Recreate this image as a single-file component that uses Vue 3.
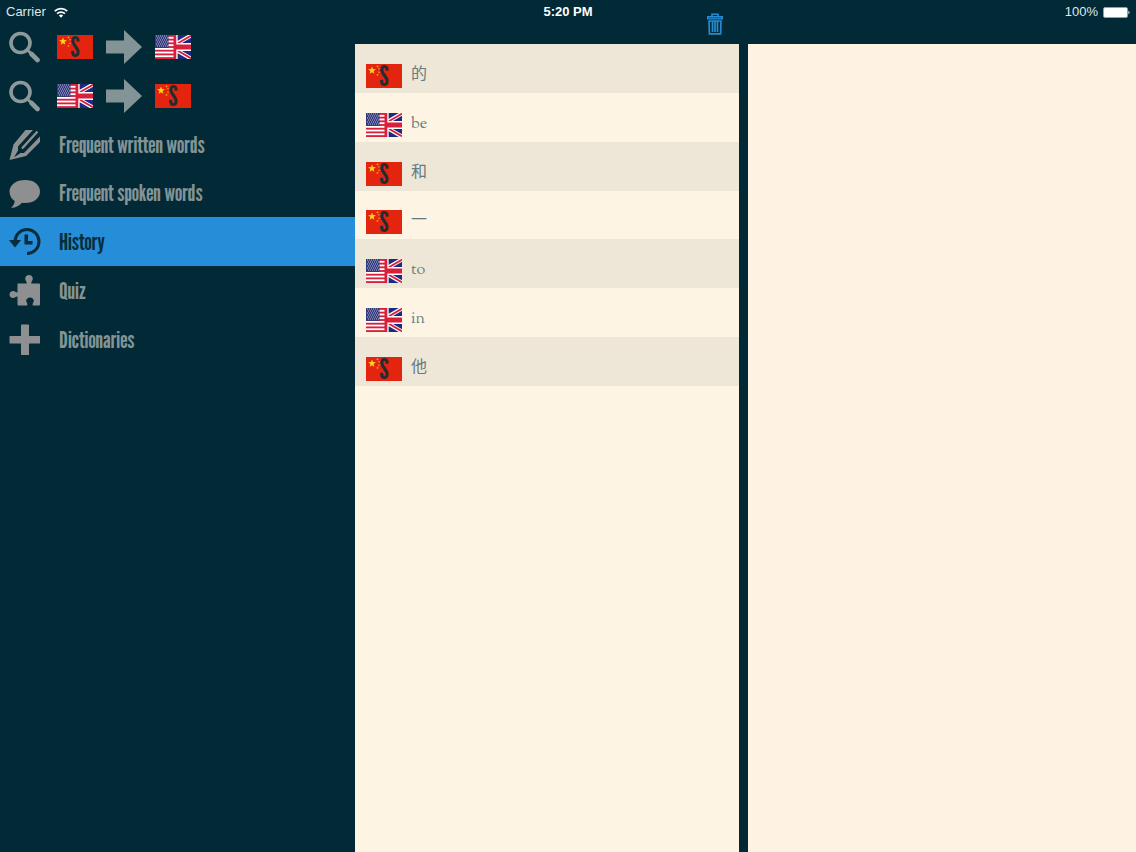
<script setup>
const nav = [
  { icon: 'search', label: 'Search Chinese to English', flags: ['cn', 'en'] },
  { icon: 'search', label: 'Search English to Chinese', flags: ['en', 'cn'] },
  { icon: 'pencil', text: 'Frequent written words' },
  { icon: 'bubble', text: 'Frequent spoken words' },
  { icon: 'history', text: 'History', active: true },
  { icon: 'puzzle', text: 'Quiz' },
  { icon: 'plus', text: 'Dictionaries' }
]
const history = [
  { flag: 'cn', word: '的' },
  { flag: 'en', word: 'be' },
  { flag: 'cn', word: '和' },
  { flag: 'cn', word: '一' },
  { flag: 'en', word: 'to' },
  { flag: 'en', word: 'in' },
  { flag: 'cn', word: '他' }
]
const stripes = [0, 2, 4, 6, 8, 10, 12]
const starRows = [1, 3, 5, 7, 9, 11]
</script>

<template>
  <div class="app">
    <svg class="defs" width="0" height="0" aria-hidden="true">
      <symbol id="cn" viewBox="0 0 36 24">
        <rect width="36" height="24" fill="#e3240f" />
        <path fill="#ffd21a" d="M6 2.500l1 2.600 2.900.1-2.300 1.800.8 2.700L6 8.200 3.600 9.700l.8-2.700L2.100 5.200 5 5.100z" />
        <g fill="#f5a623">
          <circle cx="11.500" cy="2.300" r=".9" /><circle cx="13" cy="4.800" r=".8" />
          <circle cx="13" cy="8.300" r=".8" /><circle cx="11.500" cy="10.800" r=".9" />
        </g>
      </symbol>
      <symbol id="en" viewBox="0 0 36 24">
        <rect width="36" height="24" fill="#fff" />
        <rect v-for="s in stripes" :key="s" y="0" width="20" height="1.850" fill="#d8203c" :transform="`translate(0 ${s * 1.846})`" />
        <rect width="13.500" height="13" fill="#343a7c" />
        <path v-for="(r, i) in starRows" :key="r" :d="`M${i % 2 ? 2 : 1} ${r}H13`" stroke="#c4c7e2" stroke-width=".9" stroke-dasharray="1 1" />
        <path fill="#1c2a80" d="M22.300 0H36v8H22.300zM22.300 16H36v8H22.300z" />
        <path d="M22 8.500L36 .5M22 15.500L36 23.500" stroke="#fff" stroke-width="4" />
        <path d="M22 8.700L36 .7M22 15.300L36 23.300" stroke="#d8203c" stroke-width="1.900" />
        <path fill="#fff" d="M21 0h1.500v24H21zM21 8h15v8H21z" />
        <path fill="#d8203c" d="M18.500 0h2.800v24h-2.800zM20 9.500h16v5H20z" />
      </symbol>
      <symbol id="search" viewBox="0 0 32 32">
        <circle cx="11.500" cy="12" r="9.500" fill="none" stroke="#8d999a" stroke-width="3.600" />
        <path d="M19 19.500l3 3" stroke="#8d999a" stroke-width="3" />
        <path d="M22.500 23l6 6" stroke="#8d999a" stroke-width="4.600" stroke-linecap="round" />
      </symbol>
      <symbol id="pencil" viewBox="0 0 32 32">
        <path fill="#8e8f91" d="M.5 31L4.500 15.500 16.500 1H24L9 17.500v4L7 25l-2 3 3-1.500 3.500-2.500H15L31 7.500V13L17 27z" />
        <path d="M13 19.500L28.500 2.500" stroke="#8e8f91" stroke-width="2.400" />
      </symbol>
      <symbol id="bubble" viewBox="0 0 32 32">
        <path fill="#8e8f91" d="M16 3C25 3 31 7.800 31 14.500S25 26 16 26c-1 0-2 0-3-.2-2.500 3-6.500 5.200-11 5 2.200-1.800 3.600-4 3.700-6.800C2.400 21.800.5 18.500.5 14.500.5 7.800 7.500 3 16 3z" />
      </symbol>
      <symbol id="history" viewBox="0 0 32 32">
        <path d="M6 15.500A12 12 0 1 1 18 27.500" fill="none" stroke="#052d3a" stroke-width="3" />
        <path fill="#052d3a" d="M0 14h12l-6 7.500zM15.500 8.500H19V15h4.500v3.500h-8z" />
      </symbol>
      <symbol id="puzzle" viewBox="0 0 32 32">
        <path fill="#8e8f91" d="M8.500 8.500h9.200C18 6.500 16.200 5.500 16.200 3.700 16.200 1.500 17.800 0 20 0s3.800 1.500 3.800 3.700c0 1.800-1.800 2.800-1.500 4.800H30q1 0 1 1v20q0 1-1 1h-6c-1.300-1.500.8-3 .8-4.700 0-2-1.700-3.300-3.800-3.300s-3.800 1.300-3.800 3.300c0 1.700 2.100 3.200.8 4.700H9.500q-1 0-1-1v-8c-1.500-.5-2.500 1.500-4.300 1.500C2 23 .5 21.500.5 19.500S2 16 4.200 16c1.800 0 2.800 2 4.300 1.500z" />
      </symbol>
      <symbol id="plus" viewBox="0 0 32 32">
        <path fill="#8e8f91" d="M12.500.5h7q.5 0 .5.500v11h10.500q.5 0 .5.500v6.500q0 .5-.5.500H20v11q0 .5-.5.500h-7q-.5 0-.5-.5v-11H1q-.5 0-.5-.5v-6.500q0-.5.5-.5h11V1q0-.5.5-.5z" />
      </symbol>
    </svg>

    <header class="status">
      <span class="carrier">Carrier
        <svg width="14" height="11" viewBox="0 0 14 11" aria-hidden="true">
          <path d="M.8 4.200a8.700 8.700 0 0 1 12.400 0M3.100 6.700a5.500 5.500 0 0 1 7.800 0" fill="none" stroke="#fff" stroke-width="1.700" />
          <path d="M4.900 8.600a3 3 0 0 1 4.200 0L7 10.800z" fill="#fff" />
        </svg>
      </span>
      <time class="clock">5:20 PM</time>
      <span class="battery">100%
        <svg width="27" height="11" viewBox="0 0 27 11" aria-hidden="true">
          <rect x=".5" y=".5" width="24" height="10" rx="1.500" fill="#fff" stroke="#8fa0a6" />
          <path d="M25.500 3.500q2 2 0 4z" fill="#fff" />
        </svg>
      </span>
    </header>

    <nav class="sidebar">
      <button v-for="(item, i) in nav" :key="i" class="nav-item" :class="{ active: item.active }" :aria-label="item.label">
        <svg class="icon" aria-hidden="true"><use :href="'#' + item.icon" /></svg>
        <span v-if="item.text" class="nav-text">{{ item.text }}</span>
        <span v-else class="pair">
          <template v-for="(flag, n) in item.flags" :key="flag">
            <svg v-if="n" class="arrow" viewBox="0 0 36 36" aria-hidden="true"><path d="M0 11.500h18V1l18 17-18 17V24.500H0z" fill="#839496" /></svg>
            <svg class="flag" viewBox="0 0 36 24" aria-hidden="true">
              <use :href="'#' + flag" />
              <text v-if="flag === 'cn'" class="mark" x="18" y="22">S</text>
            </svg>
          </template>
        </span>
      </button>
    </nav>

    <section class="middle">
      <div class="toolbar">
        <button class="trash" aria-label="Clear history">
          <svg width="18" height="22" viewBox="0 0 18 22" aria-hidden="true">
            <path d="M6 3V1.200h6V3" fill="none" stroke="#268bd2" stroke-width="1.600" />
            <path d="M1 3h16v3.500H1z" fill="#268bd2" />
            <path d="M2.500 4.800h13" stroke="#0e4a70" stroke-width=".8" />
            <path d="M3 7.500l.4 13.300h11.200L15 7.500M6.500 8.500V19M9 8.500V19M11.500 8.500V19M2.500 8h13" fill="none" stroke="#268bd2" stroke-width="1.700" />
          </svg>
        </button>
      </div>
      <div class="list-pane">
        <ul class="list">
          <li v-for="item in history" :key="item.word">
            <button class="entry">
              <svg class="flag" viewBox="0 0 36 24" aria-hidden="true">
                <use :href="'#' + item.flag" />
                <text v-if="item.flag === 'cn'" class="mark" x="18" y="22">S</text>
              </svg>
              <span>{{ item.word }}</span>
            </button>
          </li>
        </ul>
      </div>
    </section>

    <main class="detail"></main>
  </div>
</template>

<style>
body {
  margin: 0;
  background: #022a36;
}
</style>

<style scoped>
.app {
  display: grid;
  grid-template-columns: minmax(0, 355fr) minmax(0, 384fr) minmax(0, 397fr);
  min-height: 100vh;
  background: #022a36;
  position: relative;
}
.defs {
  position: absolute;
}
.status {
  position: absolute;
  top: 0;
  left: 0;
  right: 0;
  display: grid;
  grid-template-columns: 1fr auto 1fr;
  align-items: center;
  height: 24px;
  padding: 0 6px;
  color: #dfe8ea;
  font: 13px/24px "Liberation Sans", Arial, sans-serif;
}
.carrier,
.battery {
  display: flex;
  align-items: center;
  gap: 5px;
}
.carrier {
  gap: 8px;
}
.battery {
  justify-content: flex-end;
}
.clock {
  font-weight: bold;
  color: #fff;
}
button {
  border: 0;
  padding: 0;
  margin: 0;
  background: none;
  cursor: pointer;
  text-align: left;
}
.sidebar {
  display: grid;
  grid-template-rows: repeat(7, 1fr);
  height: 342px;
  margin-top: 22px;
}
.nav-item {
  display: flex;
  align-items: center;
  gap: 16px;
  padding: 1px 9px 0;
  color: #839496;
  font: 24px/32px "League Gothic", "Roboto Condensed", Roboto, sans-serif;
}
.nav-text {
  padding-left: 2px;
}
.nav-item.active {
  background: #268dd8;
  color: #052d3a;
}
.icon {
  width: 32px;
  height: 32px;
}
.pair {
  display: flex;
  align-items: center;
  gap: 13px;
}
.flag {
  width: 36px;
  height: 24px;
  overflow: visible;
}
.mark {
  font: 28px "League Gothic", "Liberation Serif", serif;
  text-anchor: middle;
  fill: #222c33;
}
.arrow {
  width: 36px;
  height: 36px;
}
.middle {
  display: flex;
  flex-direction: column;
}
.toolbar {
  display: flex;
  justify-content: flex-end;
  align-items: center;
  height: 44px;
  padding: 4px 15px 0 0;
  box-sizing: border-box;
}
.trash {
  position: relative;
  z-index: 1;
  display: flex;
}
.list-pane {
  flex: 1;
  background: #fdf4e3;
}
.list {
  display: grid;
  grid-template-rows: repeat(7, 1fr);
  height: 342px;
  margin: 0;
  padding: 0;
  list-style: none;
}
.list li {
  display: flex;
}
.list li:nth-child(odd) {
  background: #eee7d7;
}
.entry {
  flex: 1;
  display: flex;
  align-items: center;
  gap: 9px;
  padding: 15px 11px 0;
  color: #657b7f;
  font: 16px/24px "Sorts Mill Goudy", "EB Garamond", "Liberation Serif", "Noto Sans CJK SC", serif;
}
.detail {
  margin: 44px 0 0 9px;
  background: #fef2e2;
}
</style>
